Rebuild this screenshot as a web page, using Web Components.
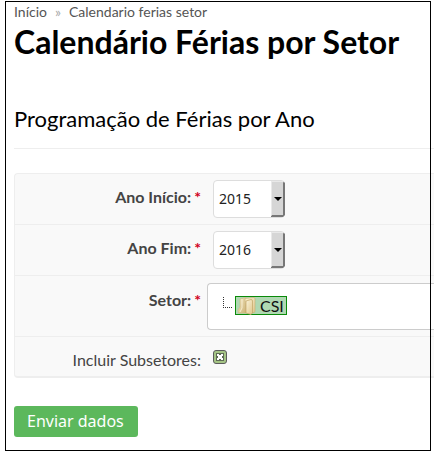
<!DOCTYPE html>
<html lang="pt-BR">
<head>
<meta charset="utf-8">
<title>Calendário Férias por Setor</title>
<style>
  body { margin: 0; background: #fff; font-family: Lato, "Noto Sans", sans-serif; color: #444; }
</style>
</head>
<body>
<page-frame>
  <bread-crumb></bread-crumb>
  <page-title>Calendário Férias por Setor</page-title>
  <section-title>Programação de Férias por Ano</section-title>
  <form-panel>
    <form-row label="Ano Início:" required><year-select name="inicio" label="Ano Início" value="2015"></year-select></form-row>
    <form-row label="Ano Fim:" required><year-select name="fim" label="Ano Fim" value="2016"></year-select></form-row>
    <form-row label="Setor:" required wide><sector-tree>CSI</sector-tree></form-row>
    <form-row label="Incluir Subsetores:"><check-box label="Incluir Subsetores"></check-box></form-row>
  </form-panel>
  <submit-button>Enviar dados</submit-button>
</page-frame>
<script>
const define = (name, html, setup) => {
  const template = document.createElement('template');
  template.innerHTML = html;
  customElements.define(name, class extends HTMLElement {
    constructor() {
      super();
      this.attachShadow({ mode: 'open' }).append(template.content.cloneNode(true));
    }
    connectedCallback() { if (setup) setup(this, this.shadowRoot); }
  });
};

define('page-frame', `
  <style>
    :host { display: block; position: relative; margin: 1px 0 0 5px; padding: 2px 0 14px 9px; overflow: hidden; }
    .outline { position: absolute; inset: 0 3px 0 0; border: 1px solid #000; pointer-events: none; }
  </style>
  <slot></slot><div class="outline"></div>`);

define('bread-crumb', `
  <style>
    :host { display: block; font-size: 14px; line-height: 18px; }
    nav { display: flex; gap: 8px; }
    a { color: #555; text-decoration: none; }
    .sep { color: #aaa; }
  </style>
  <nav aria-label="Trilha"><a href="#">Início</a><span class="sep">»</span><a href="#">Calendario ferias setor</a></nav>`);

define('page-title', `
  <style>
    :host { display: block; color: #000; }
    h1 { margin: 0; font-size: 32px; line-height: 42px; font-weight: 700; white-space: nowrap; }
  </style>
  <h1><slot></slot></h1>`);

define('section-title', `
  <style>
    :host { display: block; color: #000; margin-top: 40px; padding-bottom: 13px; border-bottom: 1px solid #eee; }
    h2 { margin: 0; font-size: 22px; line-height: 32px; font-weight: 400; }
  </style>
  <h2><slot></slot></h2>`);

define('form-panel', `
  <style>
    :host { display: block; margin-top: 24px; }
    form { background: #f9f9f9; border: 1px solid #eee; border-right: 0; border-bottom-width: 2px; border-radius: 4px 0 0 4px; }
    ::slotted(:not(:last-child)) { border-bottom: 1px solid #eee; }
  </style>
  <form><slot></slot></form>`);

define('form-row', `
  <style>
    :host { display: grid; grid-template-columns: 186px 1fr; column-gap: 12px; min-height: 39px; }
    :host([wide]) { column-gap: 6px; padding-top: 1px; }
    .label { padding-top: 13px; text-align: right; font-size: 16px; line-height: 20px; }
    :host([required]) .label { font-weight: 700; }
    .star { display: none; margin-left: 3px; color: #d0021b; }
    :host([required]) .star { display: inline; }
    .field { padding: 6px 0; }
  </style>
  <div class="label"><span class="text"></span><span class="star">*</span></div>
  <div class="field"><slot></slot></div>`,
  (host, root) => { root.querySelector('.text').textContent = host.getAttribute('label'); });

define('year-select', `
  <style>
    :host { display: grid; width: 72px; grid-template-columns: 1fr 14px; }
    select { grid-area: 1 / 1 / 2 / 3; appearance: none; height: 38px; margin: 0; padding: 0 18px 0 5px; border: 1px solid #ddd; border-radius: 4px; background: #fff; color: #222; font: 14px/20px "Noto Sans", sans-serif; }
    svg { grid-area: 1 / 2; display: block; align-self: center; z-index: 1; pointer-events: none; }
  </style>
  <select></select>
  <svg width="14" height="36" viewBox="0 0 14 36"><path d="M0 0H12L14 2V34L12 36H0z" fill="#777"/><path d="M0 0H13L12 2V34H1L0 35z" fill="#d6d6d6"/><path d="M0 0H13L12 1H1V34L0 35z" fill="#e9e9e9"/><path d="M3 16h8L7 20z" fill="#000"/></svg>`,
  (host, root) => {
    const select = root.querySelector('select');
    select.name = host.getAttribute('name');
    select.setAttribute('aria-label', host.getAttribute('label'));
    for (const year of [2014, 2015, 2016, 2017]) select.add(new Option(year, year));
    select.value = host.getAttribute('value');
  });

define('sector-tree', `
  <style>
    :host { display: flex; height: 33px; padding: 12px 0 0 14px; border: 1px solid #ccc; border-right: 0; border-radius: 4px 0 0 4px; background: #fff; }
    .branch { margin-right: 2px; }
    .node { display: flex; align-items: center; height: 19px; box-sizing: border-box; padding: 0 2px 0 1px; gap: 4px; border: 1px solid #0a8a0a; background: #b0d8b2; color: #111; font: 16px/18px Lato, sans-serif; text-decoration: none; }
  </style>
  <svg class="branch" width="11" height="18" viewBox="0 0 11 18"><path d="M1.500 1v11M1 11.500h9" fill="none" stroke="#333" stroke-dasharray="1 1"/></svg>
  <a class="node" href="#">
    <svg width="19" height="19" viewBox="0 0 19 19">
      <defs>
        <linearGradient id="back" x2="1" y2="1"><stop stop-color="#f3e8c4"/><stop offset="1" stop-color="#cdb377"/></linearGradient>
        <linearGradient id="front" x2="1" y2="1"><stop stop-color="#fbf3d8"/><stop offset="1" stop-color="#dfc78d"/></linearGradient>
      </defs>
      <path d="M3 3L9 1.500V17H1.500L1 14L3 11z" fill="url(#back)" stroke="#d0ba84" stroke-width=".6"/>
      <path d="M8 2.500L17 1.500Q18 1.500 18 3V15Q18 16.500 17 16.500H9z" fill="url(#front)" stroke="#c9ae70" stroke-width=".6"/>
      <path d="M9 5L14 3.500Q15.500 3.500 15.500 5V17L14 18.500L9 17z" fill="url(#front)" stroke="#c2a566" stroke-width=".7"/>
      <path d="M5 3v9l-2 4" fill="none" stroke="#fff6dc" stroke-width=".8"/>
    </svg>
    <span><slot></slot></span>
  </a>`);

define('check-box', `
  <style>
    :host { display: grid; width: 14px; padding-top: 7px; }
    input { grid-area: 1 / 1; appearance: none; width: 14px; height: 14px; margin: 0; border: 1px solid #5c5c5c; border-radius: 3px; background: #a5c585; }
    svg { grid-area: 1 / 1; z-index: 1; pointer-events: none; display: none; }
    input:checked + svg { display: block; }
  </style>
  <input type="checkbox" checked>
  <svg width="14" height="14" viewBox="0 0 14 14"><path d="M3 3h8v8H3z" fill="#5f6b55"/><path d="M4 4h2v1h2V4h2v2H9v2h1v2H8V9H6v1H4V8h1V6H4z" fill="#fff"/></svg>`,
  (host, root) => root.querySelector('input').setAttribute('aria-label', host.getAttribute('label')));

define('submit-button', `
  <style>
    :host { display: block; margin-top: 28px; }
    button { display: block; height: 31px; margin: 0; padding: 0 14px 2px 13px; border: 0; border-radius: 3px; background: #5cb85c; color: #fff; font: 16px/28px "Noto Sans", sans-serif; }
  </style>
  <button type="button"><slot></slot></button>`);
</script>
</body>
</html>
